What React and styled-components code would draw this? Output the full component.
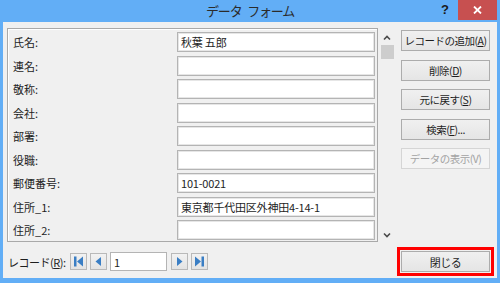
import React from 'react'
import styled, { createGlobalStyle } from 'styled-components'

const GlobalStyle = createGlobalStyle`
    html, body {
        margin: 0;
        padding: 0;
        background: #ffffff;
    }
    * {
        box-sizing: border-box;
    }
`
const Window = styled.div`
    width: 500px;
    height: 283px;
    background: #62aef6;
    display: flex;
    flex-direction: column;
    padding: 0 3px 5px 3px;
    font-family: "Noto Sans CJK JP", "Noto Sans", sans-serif;
    font-size: 11px;
    color: #1e1e1e;
    position: relative;
`
const TitleBar = styled.div`
    height: 22px;
    display: flex;
    align-items: center;
    justify-content: center;
    position: relative;
`
const Title = styled.div`
    font-size: 13px;
    color: #2b2b2b;
    letter-spacing: -1.2px;
    word-spacing: 4px;
    line-height: 22px;
`
const Help = styled.div`
    position: absolute;
    right: 48px;
    top: 0;
    height: 20px;
    line-height: 20px;
    font-family: "Liberation Sans", sans-serif;
    font-weight: bold;
    font-size: 13px;
    color: #1a1a1a;
`
const CloseX = styled.div`
    position: absolute;
    right: 0;
    top: 0;
    width: 39px;
    height: 20px;
    background: #c75050;
    color: #ffffff;
    display: flex;
    align-items: center;
    justify-content: center;
`
const Body = styled.div`
    flex: 1;
    background: #f0f0f0;
    display: flex;
    flex-direction: column;
    padding: 6px 0 0 4px;
`
const Top = styled.div`
    display: flex;
    align-items: flex-start;
`
const Panel = styled.div`
    flex-shrink: 0;
    width: 371px;
    height: 214px;
    border: 1px solid #a9a9a9;
    box-shadow: inset 1px 1px 0 #ffffff;
    padding: 3px 3px 0 4px;
    display: grid;
    grid-template-columns: 165px 198px;
    grid-auto-rows: 20px;
    row-gap: 3.5px;
`
const Label = styled.div`
    display: flex;
    align-items: center;
    padding-left: 1px;
    white-space: nowrap;
`
const Field = styled.div`
    border: 1px solid #b4b4b4;
    box-shadow: inset 0 0 0 1px #e6e6e6;
    background: #ffffff;
    display: flex;
    align-items: center;
    padding-left: 3px;
    white-space: nowrap;
    letter-spacing: -0.2px;
`
const Scroll = styled.div`
    flex-shrink: 0;
    width: 17px;
    height: 214px;
    display: flex;
    flex-direction: column;
    align-items: center;
    padding-left: 1px;
`
const Arrow = styled.div`
    height: 15px;
    display: flex;
    align-items: center;
    justify-content: center;
    margin-top: ${p => p.$down ? 'auto' : '2px'};
`
const Thumb = styled.div`
    width: 13px;
    height: 14px;
    background: #cdcdcd;
`
const Buttons = styled.div`
    flex-shrink: 0;
    margin-left: 6px;
    margin-top: 2px;
    display: flex;
    flex-direction: column;
    gap: 8.5px;
`
const Button = styled.div`
    flex-shrink: 0;
    width: 89px;
    height: 21px;
    border: 1px solid ${p => p.$disabled ? '#d5d5d5' : '#acacac'};
    background: ${p => p.$disabled ? '#f4f4f4' : 'linear-gradient(#f0f0f0, #e5e5e5)'};
    color: ${p => p.$disabled ? '#a3a3a3' : '#1e1e1e'};
    display: flex;
    align-items: center;
    justify-content: center;
    white-space: nowrap;
    font-size: 10.5px;
    letter-spacing: -0.5px;
`
const Bottom = styled.div`
    display: flex;
    align-items: center;
    margin-top: 9px;
    padding-left: 1px;
    height: 21px;
`
const NavLabel = styled.div`
    flex-shrink: 0;
    width: 62px;
    white-space: nowrap;
    letter-spacing: -0.5px;
`
const NavButton = styled.div`
    flex-shrink: 0;
    width: 17px;
    height: 17px;
    border: 1px solid #b9b9b9;
    background: linear-gradient(#f2f2f2, #e3e3e3);
    display: flex;
    align-items: center;
    justify-content: center;
    margin-right: 3px;
`
const NavInput = styled.div`
    flex-shrink: 0;
    width: 57px;
    height: 19px;
    border: 1px solid #b4b4b4;
    background: #ffffff;
    display: flex;
    align-items: center;
    padding-left: 3px;
    margin-right: 4px;
`
const CloseButton = styled(Button)`
    margin-left: auto;
    margin-right: 7px;
    font-size: 11px;
    outline: 3px solid #ff0000;
    outline-offset: 1px;
`
const Mnemonic = styled.span`
    text-decoration: underline;
`

const fields = [
  ['氏名:', '秋葉 五郎'],
  ['連名:', ''],
  ['敬称:', ''],
  ['会社:', ''],
  ['部署:', ''],
  ['役職:', ''],
  ['郵便番号:', '101-0021'],
  ['住所_1:', '東京都千代田区外神田4-14-1'],
  ['住所_2:', ''],
]

const blue = '#3a7ec4'

const First = () => (
  <svg width="11" height="11" viewBox="0 0 11 11">
    <rect x="1" y="0.5" width="2.5" height="10" fill={blue} />
    <polygon points="10,0.5 10,10.5 4,5.5" fill={blue} />
  </svg>
)
const Prev = () => (
  <svg width="11" height="11" viewBox="0 0 11 11">
    <polygon points="8,1 8,10 2.5,5.5" fill={blue} />
  </svg>
)
const Next = () => (
  <svg width="11" height="11" viewBox="0 0 11 11">
    <polygon points="3,1 3,10 8.5,5.5" fill={blue} />
  </svg>
)
const Last = () => (
  <svg width="11" height="11" viewBox="0 0 11 11">
    <polygon points="1,0.5 1,10.5 7,5.5" fill={blue} />
    <rect x="7.5" y="0.5" width="2.5" height="10" fill={blue} />
  </svg>
)
const Chevron = ({ down }) => (
  <svg width="8" height="6" viewBox="0 0 8 6">
    <polyline
      points={down ? '1,1.5 4,4.5 7,1.5' : '1,4.5 4,1.5 7,4.5'}
      fill="none"
      stroke="#4a4a4a"
      strokeWidth="1.6"
    />
  </svg>
)

const App = () => {
  return (
    <Window>
        <GlobalStyle />
        <TitleBar>
            <Title>データ フォーム</Title>
            <Help>?</Help>
            <CloseX>
                <svg width="9" height="8" viewBox="0 0 9 8">
                    <path d="M1 0.5 L8 7.5 M8 0.5 L1 7.5" stroke="#ffffff" strokeWidth="1.8" />
                </svg>
            </CloseX>
        </TitleBar>
        <Body>
            <Top>
                <Panel>
                    {fields.map(([label, value]) => (
                      <React.Fragment key={label}>
                          <Label>{label}</Label>
                          <Field>{value}</Field>
                      </React.Fragment>
                    ))}
                </Panel>
                <Scroll>
                    <Arrow><Chevron /></Arrow>
                    <Thumb />
                    <Arrow $down><Chevron down /></Arrow>
                </Scroll>
                <Buttons>
                    <Button>レコードの追加(<Mnemonic>A</Mnemonic>)</Button>
                    <Button>削除(<Mnemonic>D</Mnemonic>)</Button>
                    <Button>元に戻す(<Mnemonic>S</Mnemonic>)</Button>
                    <Button>検索(<Mnemonic>F</Mnemonic>)...</Button>
                    <Button $disabled>データの表示(V)</Button>
                </Buttons>
            </Top>
            <Bottom>
                <NavLabel>レコード(<Mnemonic>R</Mnemonic>):</NavLabel>
                <NavButton><First /></NavButton>
                <NavButton><Prev /></NavButton>
                <NavInput>1</NavInput>
                <NavButton><Next /></NavButton>
                <NavButton><Last /></NavButton>
                <CloseButton>閉じる</CloseButton>
            </Bottom>
        </Body>
    </Window>
  )
}

export default App
